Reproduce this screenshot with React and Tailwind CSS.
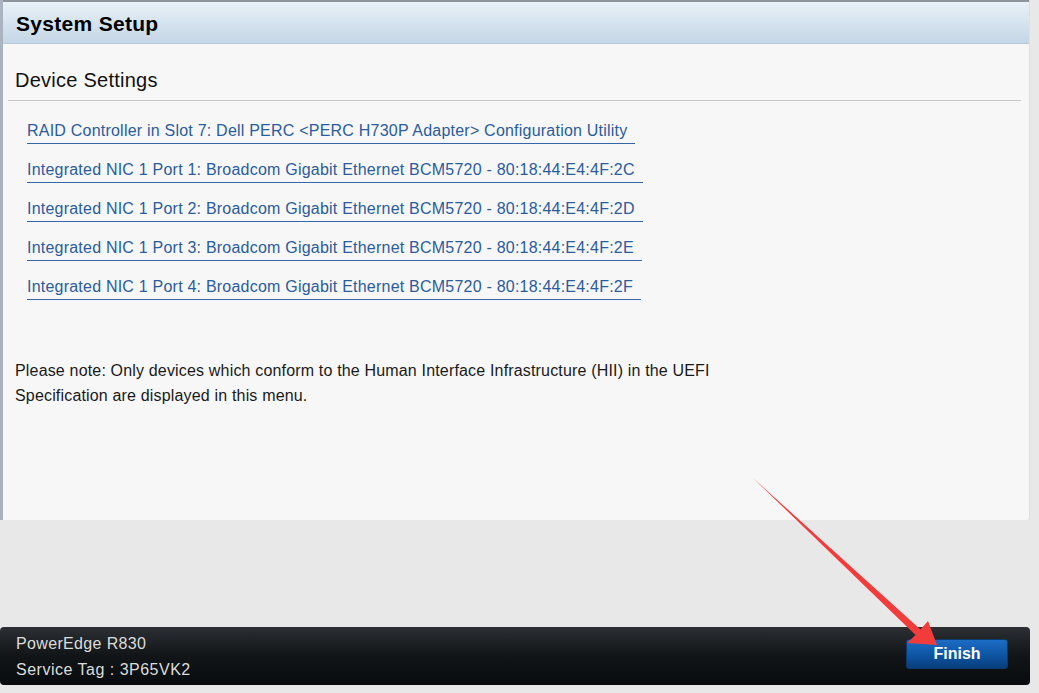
export default function App() {
  const links = [
    "RAID Controller in Slot 7: Dell PERC <PERC H730P Adapter> Configuration Utility",
    "Integrated NIC 1 Port 1: Broadcom Gigabit Ethernet BCM5720 - 80:18:44:E4:4F:2C",
    "Integrated NIC 1 Port 2: Broadcom Gigabit Ethernet BCM5720 - 80:18:44:E4:4F:2D",
    "Integrated NIC 1 Port 3: Broadcom Gigabit Ethernet BCM5720 - 80:18:44:E4:4F:2E",
    "Integrated NIC 1 Port 4: Broadcom Gigabit Ethernet BCM5720 - 80:18:44:E4:4F:2F",
  ];
  return (
    <div
      className="relative w-[1039px] h-[693px] bg-[#e8e8e8] flex flex-col overflow-hidden"
      style={{ fontFamily: '"Liberation Sans", Arial, sans-serif' }}
    >
      <div className="w-[1030px] h-[520px] flex flex-col bg-[#f7f7f7] border-l-[3px] border-l-[#aab3c0] border-r border-r-[#dedede] rounded-br-[4px]">
        <div className="h-[44px] flex items-center pl-[13px] pt-[3px] border-t-2 border-t-[#8e949c] bg-gradient-to-b from-[#e8f0f8] via-[#d6e4ef] to-[#c5d6e6] border-b border-b-[#b9c9da]">
          <span className="text-[21px] font-bold text-black tracking-[0.3px]">System Setup</span>
        </div>
        <div className="h-[56px] flex items-center pl-[12px] pt-[16px]">
          <span className="text-[20px] text-[#111] tracking-[0.25px]">Device Settings</span>
        </div>
        <div className="ml-[5px] mr-[8px] h-px bg-[#c8c8c8]" />
        <div className="flex flex-col items-start gap-[16px] pl-[24px] mt-[20px]">
          {links.map((l) => (
            <div
              key={l}
              className="text-[16px] leading-[20px] tracking-[0.22px] text-[#2b5c9b] pb-[2px] pr-[8px] border-b border-b-[#3566a6]"
            >
              {l}
            </div>
          ))}
        </div>
        <div className="pl-[12px] mt-[58px] text-[16px] leading-[25px] tracking-[0.17px] text-[#1a1a1a]">
          Please note: Only devices which conform to the Human Interface Infrastructure (HII) in the UEFI
          <br />
          Specification are displayed in this menu.
        </div>
      </div>
      <div className="flex-1" />
      <div className="w-[1030px] h-[58px] mb-[8px] rounded-[4px] bg-gradient-to-b from-[#2c3034] via-[#111517] to-[#080c0e] flex justify-between">
        <div className="pl-[16px] pt-[4px] text-[16px] leading-[26px] text-[#dcdcdc]">
          <div className="tracking-[0.35px]">PowerEdge R830</div>
          <div className="tracking-[0.5px]">Service Tag : 3P65VK2</div>
        </div>
        <div className="mt-[12px] mr-[22px] w-[102px] h-[30px] rounded-[3px] bg-gradient-to-b from-[#1c6cc4] via-[#0f57a6] to-[#083e7c] border border-[#0a3a70] flex items-center justify-center">
          <span className="text-[16px] font-bold text-white">Finish</span>
        </div>
      </div>
      <svg
        className="absolute left-0 top-0 pointer-events-none"
        width="1039"
        height="693"
        viewBox="0 0 1039 693"
      >
        <polygon
          points="753,478 920.5,629.5 928,621 937,645 907,643 915.5,635"
          fill="#f23b3b"
        />
      </svg>
    </div>
  );
}
